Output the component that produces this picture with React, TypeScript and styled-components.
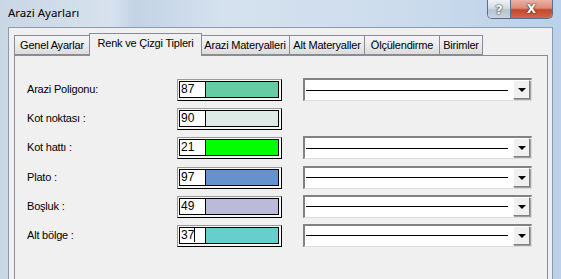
import React from "react";
import styled, { createGlobalStyle } from "styled-components";

const GlobalStyle = createGlobalStyle`
    html, body {
        margin: 0;
        padding: 0;
        background: #f0f0f0;
    }
    * {
        box-sizing: border-box;
    }
`;

const Window = styled.div`
    width: 561px;
    height: 279px;
    overflow: hidden;
    display: flex;
    flex-direction: column;
    background: linear-gradient(90deg, #c9d6e3 0%, #d7e2ee 20%, #c3d3e4 24%, #d5e1ee 40%, #cddcec 70%, #b9d1ea 100%);
    font-family: "Liberation Sans", Arial, sans-serif;
`;

const TitleBar = styled.div`
    height: 27px;
    flex: none;
    display: flex;
    justify-content: space-between;
    padding: 0 8px 0 8px;
`;

const Title = styled.div`
    font-family: "Noto Sans", "Open Sans", sans-serif;
    font-size: 11.5px;
    line-height: 24px;
    color: #000;
    padding-top: 1px;
`;

const CaptionButtons = styled.div`
    display: flex;
    align-items: flex-start;
    height: 19px;
    border: 1px solid #5d6f86;
    border-top: none;
    border-radius: 0 0 5px 5px;
    overflow: hidden;
`;

const CaptionButton = styled.div<{ $close?: boolean }>`
    width: ${p => (p.$close ? 41 : 23)}px;
    height: 18px;
    display: flex;
    align-items: center;
    justify-content: center;
    font-family: "DejaVu Sans", sans-serif;
    font-weight: bold;
    font-size: ${p => (p.$close ? 12 : 13)}px;
    color: #fff;
    text-shadow: 0 0 2px #3a3a3a, 0 0 1px #000;
    background: ${p =>
        p.$close
            ? "linear-gradient(180deg, #eab3a6 0%, #dc8a77 45%, #c5452b 55%, #d2684e 100%)"
            : "linear-gradient(180deg, #eef2f7 0%, #d3dce6 45%, #b7c3d1 55%, #c9d4df 100%)"};
    border-right: ${p => (p.$close ? "none" : "1px solid #5d6f86")};
`;

const Client = styled.div`
    flex: 1;
    margin: 0 8px;
    background: #f0f0f0;
    border-top: 1px solid #8a9bb0;
    border-left: 1px solid #8a9bb0;
    border-right: 1px solid #8a9bb0;
    padding: 5px 0 0 5px;
`;

const TabControl = styled.div`
    width: 534px;
`;

const TabStrip = styled.div`
    display: flex;
    align-items: flex-end;
    height: 22px;
    padding-left: 1px;
    position: relative;
    z-index: 1;
`;

const Tab = styled.div<{ $width: number; $active?: boolean }>`
    width: ${p => p.$width}px;
    height: ${p => (p.$active ? 23 : 20)}px;
    margin: ${p => (p.$active ? "0 -1px -1px -1px" : "0 0 0 -1px")};
    border: 1px solid #898c95;
    border-bottom: ${p => (p.$active ? "none" : "1px solid #898c95")};
    background: ${p => (p.$active ? "#f0f0f0" : "linear-gradient(180deg, #f6f6f6 0%, #ebebeb 50%, #dcdcdc 100%)")};
    font-size: 11px;
    color: #000;
    display: flex;
    justify-content: center;
    align-items: ${p => (p.$active ? "flex-start" : "center")};
    padding-top: ${p => (p.$active ? 3 : 0)}px;
    white-space: nowrap;
    letter-spacing: -0.2px;
    z-index: ${p => (p.$active ? 2 : 0)};
`;

const Panel = styled.div`
    border: 1px solid #898c95;
    border-bottom: none;
    background: #f0f0f0;
    height: 240px;
    padding: 22px 0 0 12px;
`;

const Rows = styled.div`
    display: grid;
    grid-template-columns: 150px 105px 21px 229px;
    grid-auto-rows: 29.2px;
`;

const Label = styled.div`
    grid-column: 1;
    font-size: 11px;
    letter-spacing: -0.2px;
    line-height: 22px;
    color: #000;
`;

const ColorFrame = styled.div`
    grid-column: 2;
    width: 105px;
    height: 22px;
    margin-top: 1px;
    border-top: 1px solid #9a9a9a;
    border-left: 1px solid #9a9a9a;
    border-right: 1px solid #000;
    border-bottom: 1px solid #000;
    padding: 1px 2px 2px 1px;
    background: #f7f7f7;
`;

const ColorInner = styled.div`
    display: flex;
    height: 100%;
    border: 1px solid #000;
`;

const NumberField = styled.div<{ $caret?: boolean }>`
    width: 26px;
    background: #fff;
    font-size: 12px;
    line-height: 15px;
    padding-left: 1px;
    color: #000;
    border-right: 1px solid #000;
    display: flex;
    align-items: center;

    &::after {
        content: "";
        display: ${p => (p.$caret ? "block" : "none")};
        width: 1px;
        height: 14px;
        background: #000;
    }
`;

const Swatch = styled.div<{ $color: string }>`
    flex: 1;
    background: ${p => p.$color};
`;

const Combo = styled.div`
    grid-column: 4;
    height: 23px;
    display: flex;
    border-top: 2px solid #828282;
    border-left: 2px solid #828282;
    border-right: 1px solid #dcdcdc;
    border-bottom: 1px solid #dcdcdc;
    background: #fff;
`;

const LinePreview = styled.div`
    flex: 1;
    display: flex;
    align-items: center;
    padding: 0 5px 0 1px;

    &::before {
        content: "";
        flex: 1;
        height: 1px;
        background: #000;
    }
`;

const ComboButton = styled.div`
    width: 17px;
    height: 19px;
    margin: 0 1px 0 0;
    background: #f0f0f0;
    border-top: 1px solid #fff;
    border-left: 1px solid #fff;
    border-right: 1px solid #808080;
    border-bottom: 1px solid #808080;
    box-shadow: 1px 1px 0 #a0a0a0;
    display: flex;
    align-items: center;
    justify-content: center;
`;

const Arrow = styled.div`
    width: 0;
    height: 0;
    border-left: 4px solid transparent;
    border-right: 4px solid transparent;
    border-top: 4px solid #000;
    margin-top: 1px;
`;

type Row = { label: string; value: string; color: string; line: boolean; caret?: boolean };

const rows: Row[] = [
    { label: "Arazi Poligonu:", value: "87", color: "#66cca4", line: true },
    { label: "Kot noktası :", value: "90", color: "#dfeae6", line: false },
    { label: "Kot hattı :", value: "21", color: "#00ff00", line: true },
    { label: "Plato :", value: "97", color: "#6592cc", line: true },
    { label: "Boşluk :", value: "49", color: "#bbbbd9", line: true },
    { label: "Alt bölge :", value: "37", color: "#66cecb", line: true, caret: true },
];

const tabs = [
    { name: "Genel Ayarlar", width: 76 },
    { name: "Renk ve Çizgi Tipleri", width: 113, active: true },
    { name: "Arazi Materyalleri", width: 90 },
    { name: "Alt Materyaller", width: 76 },
    { name: "Ölçülendirme", width: 76 },
    { name: "Birimler", width: 44 },
];

export default function App() {
    return (
        <>
            <GlobalStyle />
            <Window>
                <TitleBar>
                    <Title>Arazi Ayarları</Title>
                    <CaptionButtons>
                        <CaptionButton>?</CaptionButton>
                        <CaptionButton $close>X</CaptionButton>
                    </CaptionButtons>
                </TitleBar>
                <Client>
                    <TabControl>
                        <TabStrip>
                            {tabs.map(t => (
                                <Tab key={t.name} $width={t.width} $active={t.active}>
                                    {t.name}
                                </Tab>
                            ))}
                        </TabStrip>
                        <Panel>
                            <Rows>
                                {rows.map(r => (
                                    <React.Fragment key={r.label}>
                                        <Label>{r.label}</Label>
                                        <ColorFrame>
                                            <ColorInner>
                                                <NumberField $caret={r.caret}>{r.value}</NumberField>
                                                <Swatch $color={r.color} />
                                            </ColorInner>
                                        </ColorFrame>
                                        {r.line ? (
                                            <Combo>
                                                <LinePreview />
                                                <ComboButton>
                                                    <Arrow />
                                                </ComboButton>
                                            </Combo>
                                        ) : (
                                            <div />
                                        )}
                                    </React.Fragment>
                                ))}
                            </Rows>
                        </Panel>
                    </TabControl>
                </Client>
            </Window>
        </>
    );
}
